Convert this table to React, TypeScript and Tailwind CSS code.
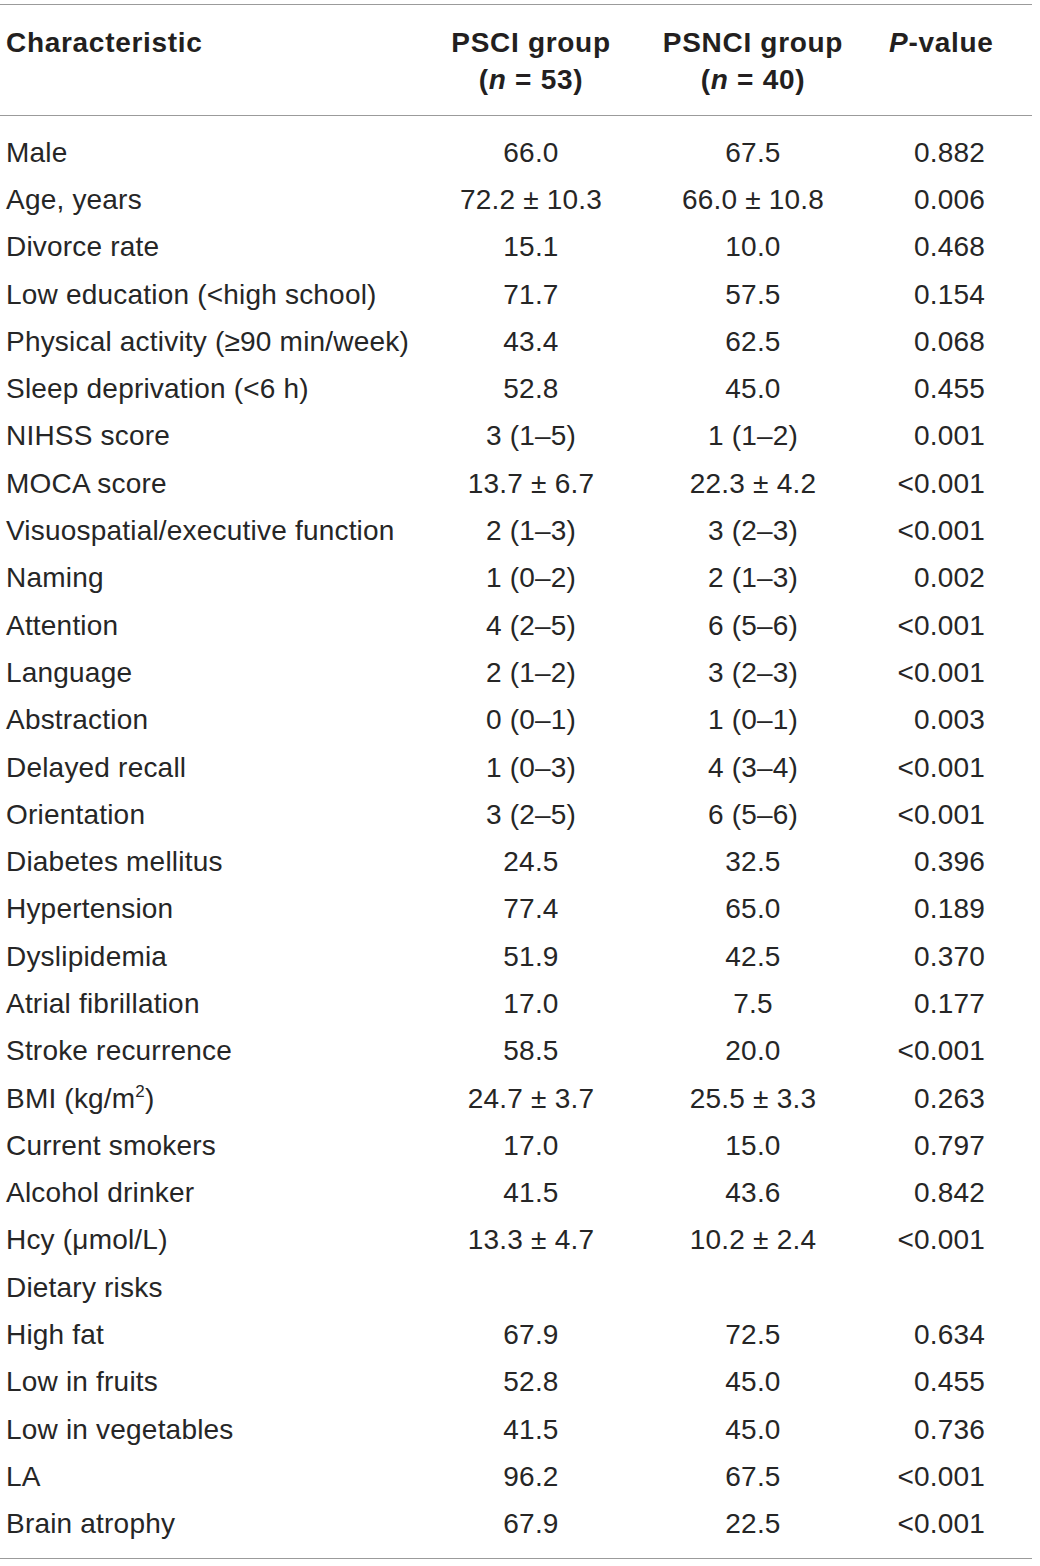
import React from 'react';

type Row = [string | React.ReactNode, string, string, string];

const rows: Row[] = [
  ['Male', '66.0', '67.5', '0.882'],
  ['Age, years', '72.2 ± 10.3', '66.0 ± 10.8', '0.006'],
  ['Divorce rate', '15.1', '10.0', '0.468'],
  ['Low education (<high school)', '71.7', '57.5', '0.154'],
  ['Physical activity (≥90 min/week)', '43.4', '62.5', '0.068'],
  ['Sleep deprivation (<6 h)', '52.8', '45.0', '0.455'],
  ['NIHSS score', '3 (1–5)', '1 (1–2)', '0.001'],
  ['MOCA score', '13.7 ± 6.7', '22.3 ± 4.2', '<0.001'],
  ['Visuospatial/executive function', '2 (1–3)', '3 (2–3)', '<0.001'],
  ['Naming', '1 (0–2)', '2 (1–3)', '0.002'],
  ['Attention', '4 (2–5)', '6 (5–6)', '<0.001'],
  ['Language', '2 (1–2)', '3 (2–3)', '<0.001'],
  ['Abstraction', '0 (0–1)', '1 (0–1)', '0.003'],
  ['Delayed recall', '1 (0–3)', '4 (3–4)', '<0.001'],
  ['Orientation', '3 (2–5)', '6 (5–6)', '<0.001'],
  ['Diabetes mellitus', '24.5', '32.5', '0.396'],
  ['Hypertension', '77.4', '65.0', '0.189'],
  ['Dyslipidemia', '51.9', '42.5', '0.370'],
  ['Atrial fibrillation', '17.0', '7.5', '0.177'],
  ['Stroke recurrence', '58.5', '20.0', '<0.001'],
  [<>BMI (kg/m<sup className="text-[17px] relative -top-[11px]">2</sup>)</>, '24.7 ± 3.7', '25.5 ± 3.3', '0.263'],
  ['Current smokers', '17.0', '15.0', '0.797'],
  ['Alcohol drinker', '41.5', '43.6', '0.842'],
  ['Hcy (μmol/L)', '13.3 ± 4.7', '10.2 ± 2.4', '<0.001'],
  ['Dietary risks', '', '', ''],
  ['High fat', '67.9', '72.5', '0.634'],
  ['Low in fruits', '52.8', '45.0', '0.455'],
  ['Low in vegetables', '41.5', '45.0', '0.736'],
  ['LA', '96.2', '67.5', '<0.001'],
  ['Brain atrophy', '67.9', '22.5', '<0.001'],
];

const cols = 'grid grid-cols-[430px_202px_242px_158px]';

export default function App() {
  return (
    <div className="w-[1040px] h-[1566px] bg-white text-[#262626] font-['Liberation_Sans',Arial,sans-serif] text-[28px] tracking-[0.2px]">
      <div className="w-[1032px] pt-[4px]">
        <div className="border-t-[1.5px] border-[#9b9b9b]" />
        <div className={`${cols} font-bold leading-[37px] pt-[19px] pb-[17px] tracking-[0.7px] text-[#231f20]`}>
          <div className="pl-[6px]">Characteristic</div>
          <div className="text-center">
            PSCI group
            <br />(<i>n</i> = 53)
          </div>
          <div className="text-center">
            PSNCI group
            <br />(<i>n</i> = 40)
          </div>
          <div className="pl-[15px]">
            <i>P</i>-value
          </div>
        </div>
        <div className="border-t-[1.5px] border-[#9b9b9b]" />
        <div className="pt-[13px] pb-[10px]">
          {rows.map((r, i) => (
            <div key={i} className={`${cols} h-[47.31px] items-center`}>
              <div className="pl-[6px] whitespace-nowrap">{r[0]}</div>
              <div className="text-center">{r[1]}</div>
              <div className="text-center">{r[2]}</div>
              <div className="text-right pr-[47px]">{r[3]}</div>
            </div>
          ))}
        </div>
        <div className="border-t-[1.5px] border-[#9b9b9b]" />
      </div>
    </div>
  );
}
